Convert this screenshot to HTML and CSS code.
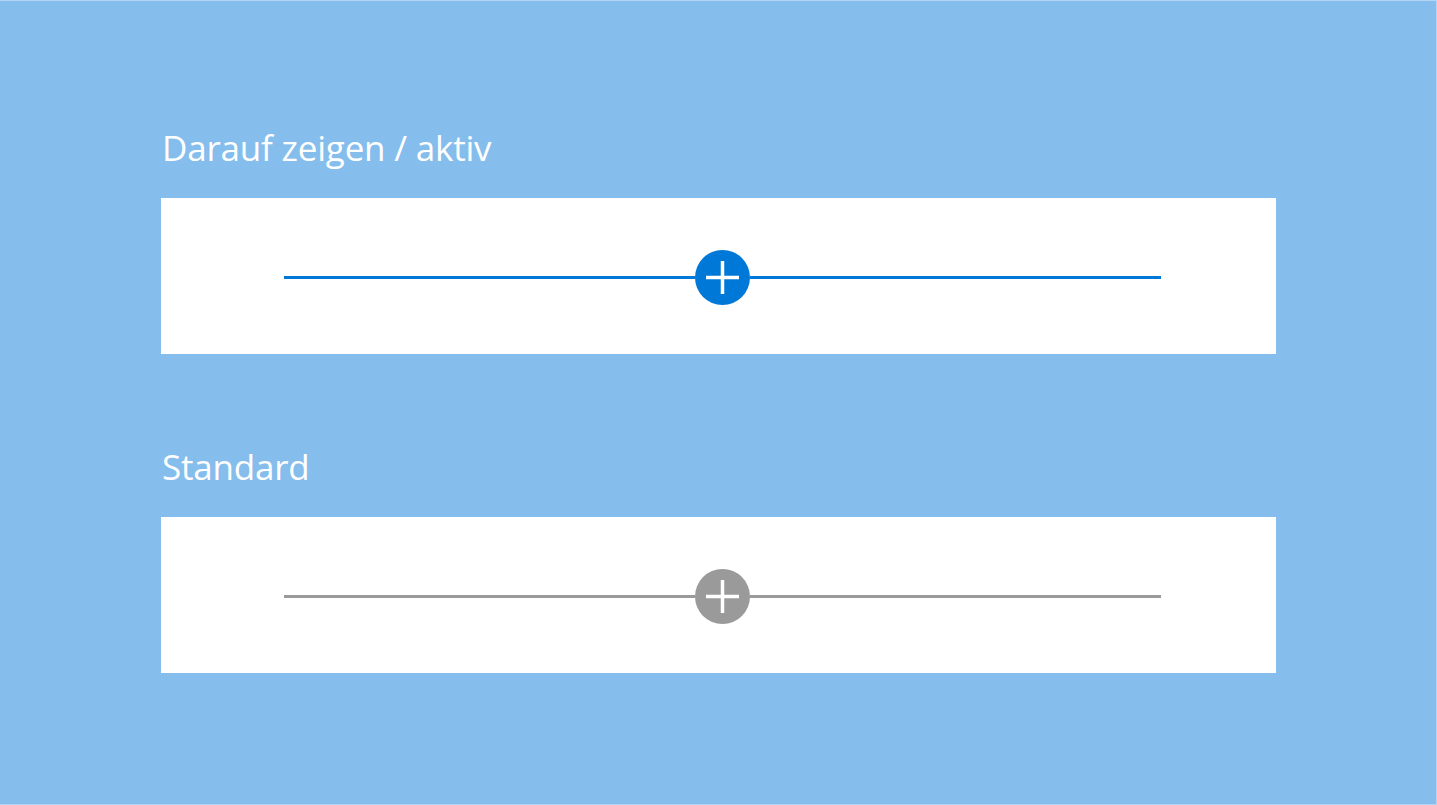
FILE: index.html
```html
<!DOCTYPE html>
<html lang="de">
<head>
<meta charset="utf-8">
<link rel="stylesheet" href="styles.css">
</head>
<body>
<div class="frame">
  <section class="group">
    <h2 class="label">Darauf zeigen / aktiv</h2>
    <div class="panel">
      <div class="track track-active">
        <span class="rail"></span>
        <span class="knob">
          <svg width="33" height="33" viewBox="0 0 33 33"><path d="M16.5 0V33M0 16.5H33" stroke="#fff" stroke-width="3.5"/></svg>
        </span>
        <span class="rail"></span>
      </div>
    </div>
  </section>
  <section class="group">
    <h2 class="label">Standard</h2>
    <div class="panel">
      <div class="track track-default">
        <span class="rail"></span>
        <span class="knob">
          <svg width="33" height="33" viewBox="0 0 33 33"><path d="M16.5 0V33M0 16.5H33" stroke="#fff" stroke-width="3.5"/></svg>
        </span>
        <span class="rail"></span>
      </div>
    </div>
  </section>
</div>
</body>
</html>
```
FILE: styles.css
```css
html, body {
  margin: 0;
  padding: 0;
}
body {
  width: 1437px;
  height: 805px;
  background: #85bdec;
  font-family: "Open Sans", "Noto Sans", sans-serif;
  overflow: hidden;
}
.frame {
  box-sizing: border-box;
  width: 1437px;
  height: 805px;
  border-top: 1px solid #b3d5f3;
  border-right: 1px solid #b3d5f3;
  border-bottom: 1px solid #b3d5f3;
  padding: 127px 0 0 161px;
  display: flex;
  flex-direction: column;
  gap: 93px;
}
.label {
  margin: 0;
  color: #fff;
  font-weight: 400;
  font-size: 35px;
  line-height: 40px;
  letter-spacing: -0.2px;
  padding-left: 1px;
}
.group {
  display: flex;
  flex-direction: column;
  gap: 30px;
}
.panel {
  width: 1115px;
  height: 156px;
  background: #fff;
  box-sizing: border-box;
  padding-left: 123px;
  display: flex;
  align-items: center;
}
.track {
  width: 877px;
  display: flex;
  align-items: center;
  margin-top: 2px;
}
.rail {
  flex: 1;
  height: 3px;
}
.knob {
  width: 55px;
  height: 55px;
  border-radius: 50%;
  display: flex;
  align-items: center;
  justify-content: center;
  flex: none;
}
.track-active .rail,
.track-active .knob {
  background: #0078d7;
}
.track-default .rail,
.track-default .knob {
  background: #9a9a9a;
}
```
